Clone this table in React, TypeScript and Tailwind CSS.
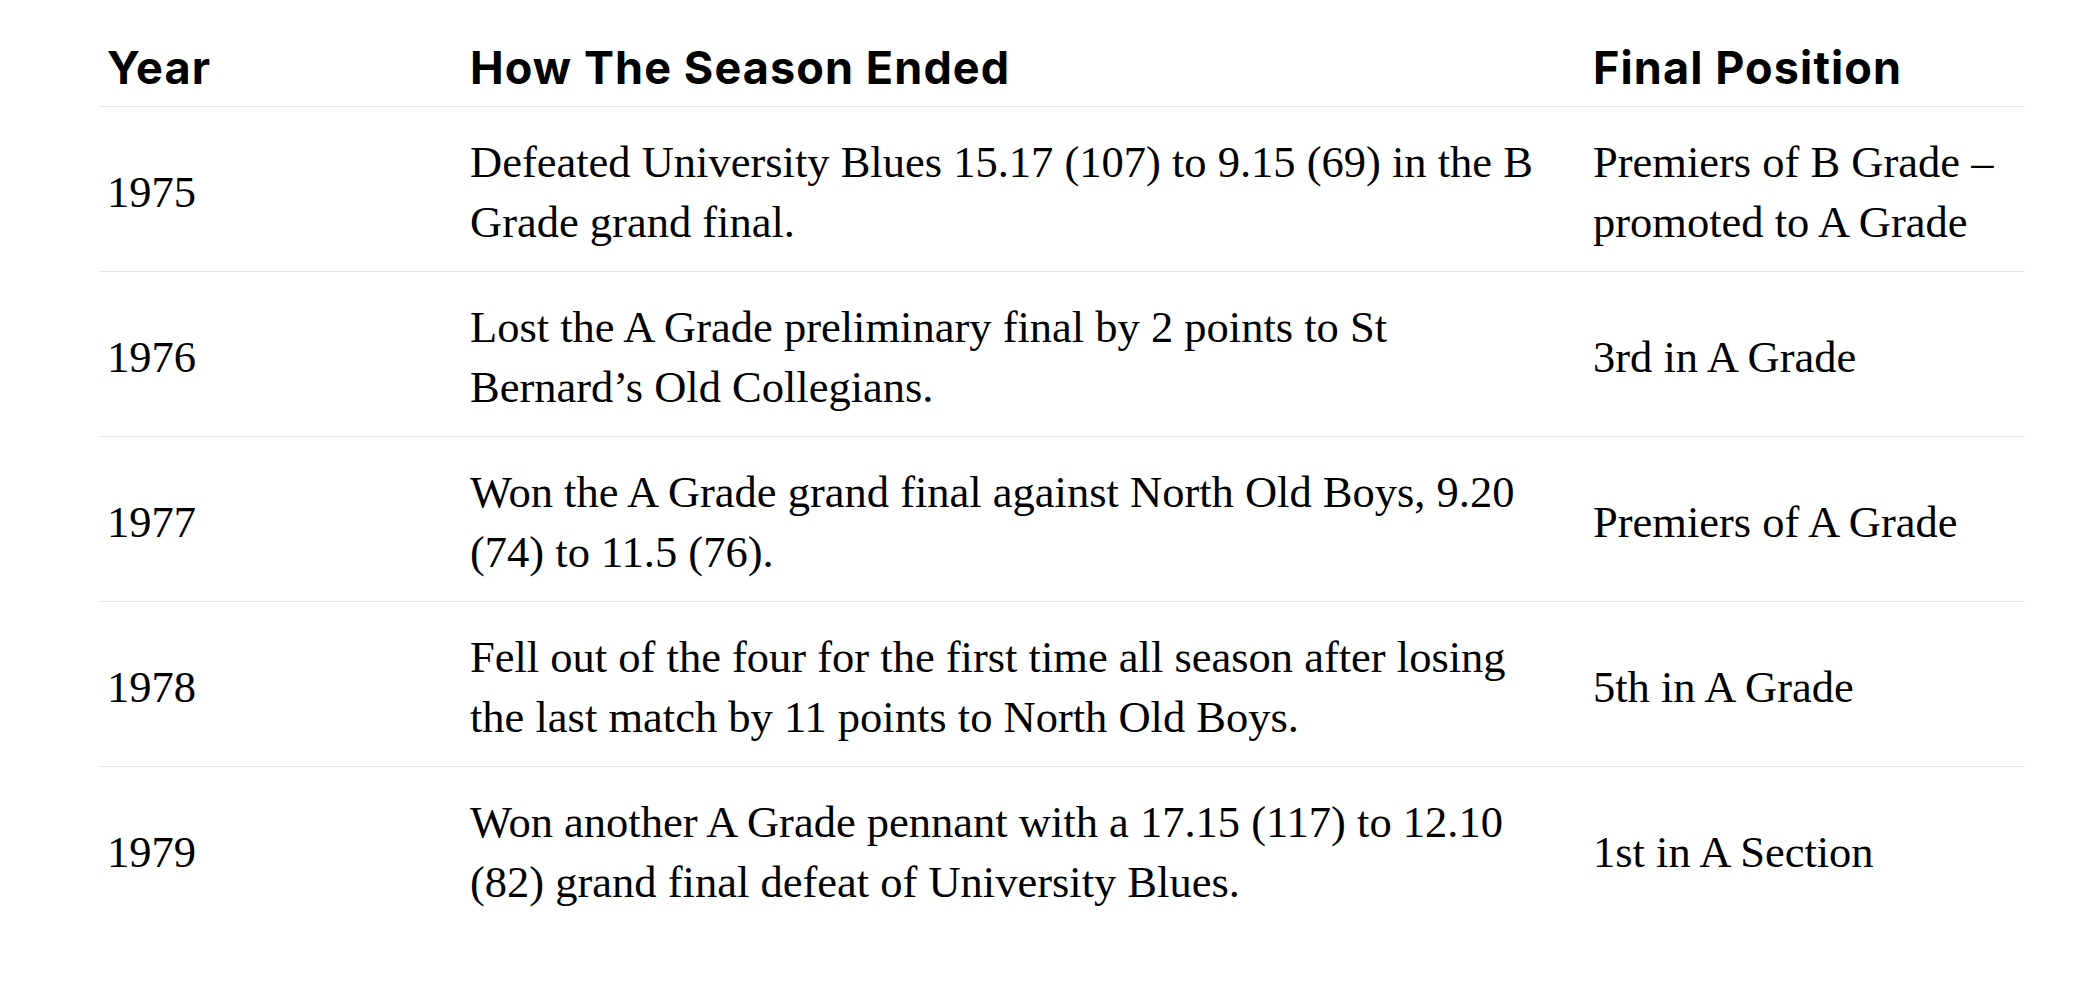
import React from 'react';

interface SeasonRow {
  year: string;
  ended: string[];
  position: string[];
}

const rows: SeasonRow[] = [
  {
    year: '1975',
    ended: ['Defeated University Blues 15.17 (107) to 9.15 (69) in the B', 'Grade grand final.'],
    position: ['Premiers of B Grade –', 'promoted to A Grade'],
  },
  {
    year: '1976',
    ended: ['Lost the A Grade preliminary final by 2 points to St', 'Bernard’s Old Collegians.'],
    position: ['3rd in A Grade'],
  },
  {
    year: '1977',
    ended: ['Won the A Grade grand final against North Old Boys, 9.20', '(74) to 11.5 (76).'],
    position: ['Premiers of A Grade'],
  },
  {
    year: '1978',
    ended: ['Fell out of the four for the first time all season after losing', 'the last match by 11 points to North Old Boys.'],
    position: ['5th in A Grade'],
  },
  {
    year: '1979',
    ended: ['Won another A Grade pennant with a 17.15 (117) to 12.10', '(82) grand final defeat of University Blues.'],
    position: ['1st in A Section'],
  },
];

const Lines: React.FC<{ lines: string[] }> = ({ lines }) => (
  <>
    {lines.map((l, i) => (
      <span key={i} className="block whitespace-nowrap">
        {l}
      </span>
    ))}
  </>
);

export default function App() {
  return (
    <div className="min-h-screen bg-white pl-[99px] pr-[73px] pt-[22px]">
      <table className="w-full table-fixed border-collapse text-black">
        <colgroup>
          <col className="w-[363px]" />
          <col className="w-[1123px]" />
          <col />
        </colgroup>
        <thead>
          <tr className="border-b border-[#e6e6e6]">
            {['Year', 'How The Season Ended', 'Final Position'].map((h) => (
              <th
                key={h}
                className="px-2 pt-[19px] pb-[12px] text-left align-middle font-['Inter',sans-serif] text-[45px] font-bold leading-[53px] tracking-[1.1px]"
              >
                {h}
              </th>
            ))}
          </tr>
        </thead>
        <tbody className="font-['Liberation_Serif',serif] text-[44.5px] leading-[60px]">
          {rows.map((r, i) => (
            <tr key={r.year} className={i < rows.length - 1 ? 'border-b border-[#e6e6e6]' : ''}>
              <td className="px-2 pt-[25px] pb-[19px] align-middle">{r.year}</td>
              <td className="px-2 pt-[25px] pb-[19px] align-middle">
                <Lines lines={r.ended} />
              </td>
              <td className="px-2 pt-[25px] pb-[19px] align-middle">
                <Lines lines={r.position} />
              </td>
            </tr>
          ))}
        </tbody>
      </table>
    </div>
  );
}
